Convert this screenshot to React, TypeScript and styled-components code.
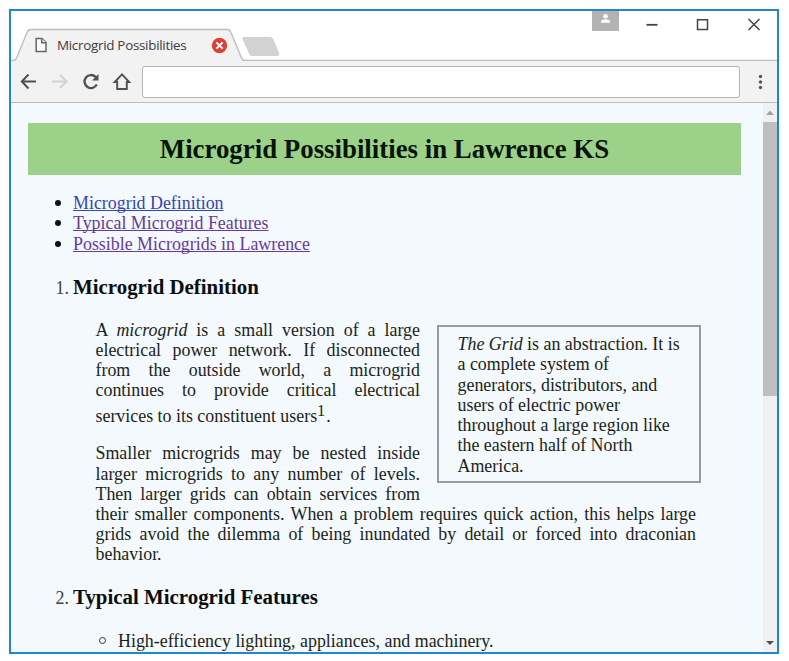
import React from "react";
import styled, { createGlobalStyle } from "styled-components";

const Global = createGlobalStyle`
  * { box-sizing: border-box; }
  html, body { margin: 0; background: #fff; overflow: hidden; }
`;

const Desktop = styled.div`
  width: 789px;
  height: 661px;
  padding: 9px;
  overflow: hidden;
`;
const Window = styled.div`
  width: 770px;
  height: 645px;
  border: 2px solid #2286cd;
  display: flex;
  flex-direction: column;
  background: #fff;
  overflow: hidden;
`;
const TabStrip = styled.div`
  height: 50px;
  flex: none;
  display: grid;
  grid-template-columns: 256px 1fr 186px;
`;
const TabArea = styled.div`
  position: relative;
  height: 50px;
`;
const TabShape = styled.svg`
  position: absolute;
  left: 0;
  top: 0;
  width: 766px;
  height: 50px;
`;
const TabContent = styled.div`
  position: relative;
  display: flex;
  align-items: center;
  height: 28px;
  margin: 20px 0 0 24px;
`;
const TabTitle = styled.span`
  font: 13.4px/20px "Open Sans", "Noto Sans", sans-serif;
  letter-spacing: -0.28px;
  color: #3c3c3c;
  width: 164px;
  padding-left: 10px;
  white-space: nowrap;
`;
const Controls = styled.div`
  position: relative;
  grid-column: 3;
  display: flex;
  align-items: flex-start;
`;
const Profile = styled.div`
  width: 27px;
  height: 20px;
  margin-left: 1px;
  background: #b3b3b3;
  display: flex;
  justify-content: center;
`;
const ControlIcons = styled.svg`
  width: 158px;
  height: 30px;
`;
const Toolbar = styled.div`
  height: 42px;
  flex: none;
  display: flex;
  align-items: center;
  background: #f2f2f2;
  border-bottom: 1px solid #bcbcbc;
`;
const NavIcons = styled.svg`
  width: 131px;
  height: 41px;
  flex: none;
`;
const Address = styled.div`
  width: 598px;
  height: 32px;
  border: 1px solid #b4b4b4;
  border-radius: 3px;
  background: #fff;
`;
const MenuIcon = styled.svg`
  width: 37px;
  height: 41px;
`;
const Viewport = styled.div`
  flex: 1;
  min-height: 0;
  display: flex;
  background: #f3f9fc;
`;
const Page = styled.main`
  width: 752px;
  flex: none;
  padding: 20px 22px 0 17px;
  overflow: hidden;
  font: 17.9px/20.2px "Liberation Serif", serif;
  color: #1c1f20;
`;
const Banner = styled.h1`
  margin: 0;
  height: 52px;
  background: #9cd189;
  color: #071407;
  font-size: 26.85px;
  line-height: 52px;
  text-align: center;
`;
const LinkList = styled.ul`
  list-style: none;
  margin: 18.2px 0 0;
  padding: 0 0 0 27px;
`;
const LinkItem = styled.li`
  display: flex;
  align-items: center;
  gap: 12px;
`;
const Bullet = styled.span<{ $hollow?: boolean }>`
  width: ${(p) => (p.$hollow ? 7 : 6)}px;
  height: ${(p) => (p.$hollow ? 7 : 6)}px;
  border-radius: 50%;
  background: ${(p) => (p.$hollow ? "transparent" : "#111")};
  border: ${(p) => (p.$hollow ? "1.2px solid #333" : "none")};
`;
const Link = styled.a<{ $visited?: boolean }>`
  color: ${(p) => (p.$visited ? "#68399b" : "#3445b4")};
  text-decoration: underline;
  text-decoration-thickness: 1px;
  text-decoration-skip-ink: none;
  text-underline-offset: 1px;
  white-space: nowrap;
`;
const Sections = styled.ol`
  list-style: none;
  margin: 21px 0 0;
  padding: 0 0 0 27.5px;
`;
const Section = styled.li`
  margin-bottom: 20.4px;
`;
const SectionHead = styled.div`
  display: flex;
  align-items: baseline;
  height: 24px;
  line-height: 24px;
`;
const Num = styled.span`
  width: 17.5px;
  color: #3d4244;
`;
const SectionTitle = styled.h3`
  margin: 0;
  font-size: 20.9px;
  line-height: 24px;
  color: #0b0d0e;
  white-space: nowrap;
`;
const Prose = styled.div`
  margin: 21px 0 0 40px;
  width: 600.5px;
`;
const Para = styled.p`
  margin: 0 0 18px;
  text-align: justify;
`;
const Sup = styled.sup`
  font-size: 16.5px;
  line-height: 20px;
  margin-right: 1px;
  vertical-align: 5.5px;
`;
const Aside = styled.aside`
  float: right;
  width: 263.5px;
  height: 158px;
  margin: 4.9px -4.5px 10px 17px;
  padding: 7.6px 10px 0 18.5px;
  border: 2px solid #979b9d;
`;
const Features = styled.ul`
  list-style: none;
  margin: 21.6px 0 0;
  padding: 0 0 0 43.5px;
`;
const Scrollbar = styled.div`
  width: 14px;
  display: flex;
  flex-direction: column;
  align-items: center;
  background: #f0f0f1;
`;
const Thumb = styled.div`
  width: 14px;
  height: 274px;
  background: #bfbfbf;
`;
const Arrow = styled.svg`
  width: 14px;
  height: 19px;
  flex: none;
`;
const Spacer = styled.div`
  flex: 1;
`;

const links = [
  { text: "Microgrid Definition", visited: false },
  { text: "Typical Microgrid Features", visited: true },
  { text: "Possible Microgrids in Lawrence", visited: true },
];

export default function App() {
  return (
    <Desktop>
      <Global />
      <Window>
        <TabStrip>
          <TabArea>
            <TabShape viewBox="0 0 766 50">
              <path d="M0 49.5H3Q5 49 6 46L16 21.5Q17 18.5 20 18.5H216Q219 18.5 220 21.5L230.500 47Q231.500 49.500 234 49.500V50H0Z" fill="#f2f2f2" />
              <path d="M0 49.5H3Q5 49 6 46L16 21.5Q17 18.5 20 18.5H216Q219 18.5 220 21.5L230.500 47Q231.500 49.500 234 49.500H766" fill="none" stroke="#bcbcbc" strokeWidth="1.3" />
              <path d="M233 26H259Q261.500 26 262.500 28.500L268 42Q269 45 266 45H241Q239 45 238 42.500L231.500 28Q230.500 26 233 26Z" fill="#d2d2d2" />
            </TabShape>
            <TabContent>
              <svg width="12" height="16" viewBox="0 0 12 16" fill="#fafafa" stroke="#666" strokeWidth="1.5">
                <path d="M1.200 1.500H7L11 5.500V14.500H1.200Z" />
                <path d="M6.800 1.500V5.700H11" />
              </svg>
              <TabTitle>Microgrid Possibilities</TabTitle>
              <svg width="17" height="17" viewBox="0 0 17 17">
                <circle cx="8.500" cy="8.500" r="7.700" fill="#da4238" />
                <path d="M5.400 5.400L11.600 11.600M11.600 5.400L5.400 11.600" stroke="#fff" strokeWidth="2" />
              </svg>
            </TabContent>
          </TabArea>
          <Controls>
            <Profile>
              <svg width="11" height="13" viewBox="0 0 11 13" fill="#fff">
                <circle cx="5.500" cy="5.200" r="2.300" />
                <path d="M1 11.800V10.500Q1.500 8.300 5.500 8.300T10 10.500V11.800Z" />
              </svg>
            </Profile>
            <ControlIcons viewBox="0 0 158 30" fill="none" stroke="#444" strokeWidth="1.500">
              <path d="M27.500 13.800H38.500" strokeWidth="1.800" />
              <path d="M78.500 8.700H88.500V18.500H78.500Z" />
              <path d="M129.500 8L140.500 19M140.500 8L129.500 19" />
            </ControlIcons>
          </Controls>
        </TabStrip>
        <Toolbar>
          <NavIcons viewBox="0 0 131 41" fill="none" stroke="#505050" strokeWidth="2">
            <path d="M25 20.500H11.500M17.500 13.500L10.800 20.500L17.500 27.500" />
            <path d="M41 20.500H54.500M49 14L55.500 20.500L49 27" stroke="#d2d2d2" />
            <path d="M85.800 23.500A6.500 6.500 0 1 1 84.600 15.900L86 17.500" strokeWidth="2.300" />
            <path d="M87.500 13V19.500H81Z" fill="#505050" stroke="none" />
            <path d="M103.800 21L111 13.300L118.200 21H115.800V28H106.200V21Z" strokeWidth="1.900" />
          </NavIcons>
          <Address />
          <MenuIcon viewBox="0 0 37 41" fill="#555">
            <circle cx="20.500" cy="15.500" r="1.700" />
            <circle cx="20.500" cy="21" r="1.700" />
            <circle cx="20.500" cy="26.500" r="1.700" />
          </MenuIcon>
        </Toolbar>
        <Viewport>
          <Page>
            <Banner>Microgrid Possibilities in Lawrence KS</Banner>
            <LinkList>
              {links.map((l) => (
                <LinkItem key={l.text}>
                  <Bullet />
                  <Link $visited={l.visited}>{l.text}</Link>
                </LinkItem>
              ))}
            </LinkList>
            <Sections>
              <Section>
                <SectionHead>
                  <Num>1.</Num>
                  <SectionTitle>Microgrid Definition</SectionTitle>
                </SectionHead>
                <Prose>
                  <Aside>
                    <em>The Grid</em> is an abstraction. It is a complete system of generators,
                    distributors, and users of electric power throughout a large region like the
                    eastern half of North America.
                  </Aside>
                  <Para>
                    A <em>microgrid</em> is a small version of a large electrical power network. If
                    disconnected from the outside world, a microgrid continues to provide critical
                    electrical services to its constituent users<Sup>1</Sup>.
                  </Para>
                  <Para>
                    Smaller microgrids may be nested inside larger microgrids to any number of
                    levels. Then larger grids can obtain services from their smaller components.
                    When a problem requires quick action, this helps large grids avoid the dilemma
                    of being inundated by detail or forced into draconian behavior.
                  </Para>
                </Prose>
              </Section>
              <Section>
                <SectionHead>
                  <Num>2.</Num>
                  <SectionTitle>Typical Microgrid Features</SectionTitle>
                </SectionHead>
                <Features>
                  <LinkItem>
                    <Bullet $hollow />
                    <span>High-efficiency lighting, appliances, and machinery.</span>
                  </LinkItem>
                </Features>
              </Section>
            </Sections>
          </Page>
          <Scrollbar>
            <Arrow viewBox="0 0 14 19">
              <path d="M3 12L7 7.500L11 12Z" fill="#a0a0a0" />
            </Arrow>
            <Thumb />
            <Spacer />
            <Arrow viewBox="0 0 14 19">
              <path d="M3 8L7 12L11 8Z" fill="#505050" />
            </Arrow>
          </Scrollbar>
        </Viewport>
      </Window>
    </Desktop>
  );
}
